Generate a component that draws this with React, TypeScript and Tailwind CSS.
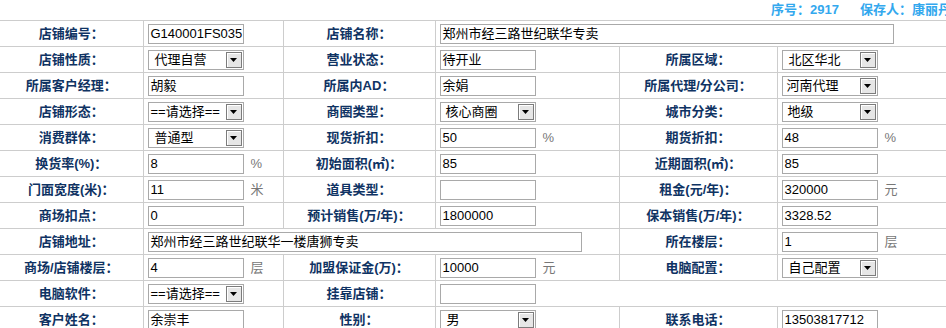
import React from "react";

const FONT = '"Liberation Sans", "Noto Sans CJK SC", sans-serif';

function Label({ children }: { children: React.ReactNode }) {
  return (
    <td className="h-[26px] border border-[#cdcdcd] text-center align-middle text-[13px] font-bold whitespace-nowrap text-[#0f3363]">
      {children}
    </td>
  );
}

function TextBox({ value, width = 96 }: { value?: string; width?: number }) {
  return (
    <div
      className="box-border flex h-[20px] items-center border border-[#a9a9a9] bg-white pl-[2px] text-[13px] leading-none whitespace-nowrap text-black"
      style={{ width }}
    >
      {value}
    </div>
  );
}

function Select({ value, pad = 6 }: { value: string; pad?: number }) {
  return (
    <div className="box-border flex h-[20px] w-[96px] items-center border border-[#a9a9a9] bg-white">
      <span className="flex-1 text-[13px] leading-none whitespace-nowrap text-black" style={{ paddingLeft: pad }}>
        {value}
      </span>
      <span className="mr-[1px] box-border flex h-[16px] w-[16px] items-center justify-center border border-[#7c7c7c] bg-[#e6e6e6] shadow-[inset_1px_1px_0_#ffffff]">
        <svg width="7" height="4" viewBox="0 0 7 4">
          <path d="M0 0h7L3.5 4z" fill="#000" />
        </svg>
      </span>
    </div>
  );
}

function Field({
  children,
  unit,
  colSpan,
}: {
  children?: React.ReactNode;
  unit?: string;
  colSpan?: number;
}) {
  return (
    <td colSpan={colSpan} className="h-[26px] border border-[#cdcdcd] pl-[4px] align-middle">
      <div className="flex items-center">
        {children}
        {unit && <span className="ml-[7px] text-[13px] text-[#777]">{unit}</span>}
      </div>
    </td>
  );
}

export default function App() {
  return (
    <div className="w-[946px] h-[328px] overflow-hidden bg-white" style={{ fontFamily: FONT }}>
      <div className="flex h-[20px] items-center pl-[771px] text-[13px] font-bold whitespace-nowrap text-[#33a8ee]">
        <span>序号：2917</span>
        <span className="ml-[21px]">保存人：康丽丹</span>
      </div>
      <table className="w-[970px] table-fixed border-collapse">
        <colgroup>
          <col className="w-[143px]" />
          <col className="w-[140px]" />
          <col className="w-[152px]" />
          <col className="w-[184px]" />
          <col className="w-[158px]" />
          <col className="w-[193px]" />
        </colgroup>
        <tbody className="[&_tr>td:first-child]:border-l-0">
          <tr>
            <Label>店铺编号：</Label>
            <Field><TextBox value="G140001FS035" /></Field>
            <Label>店铺名称：</Label>
            <Field colSpan={3}><TextBox value="郑州市经三路世纪联华专卖" width={454} /></Field>
          </tr>
          <tr>
            <Label>店铺性质：</Label>
            <Field><Select value="代理自营" /></Field>
            <Label>营业状态：</Label>
            <Field><TextBox value="待开业" /></Field>
            <Label>所属区域：</Label>
            <Field><Select value="北区华北" /></Field>
          </tr>
          <tr>
            <Label>所属客户经理：</Label>
            <Field><TextBox value="胡毅" /></Field>
            <Label>所属内AD：</Label>
            <Field><TextBox value="余娟" /></Field>
            <Label>所属代理/分公司：</Label>
            <Field><Select value="河南代理" pad={4} /></Field>
          </tr>
          <tr>
            <Label>店铺形态：</Label>
            <Field><Select value="==请选择==" pad={2} /></Field>
            <Label>商圈类型：</Label>
            <Field><Select value="核心商圈" pad={5} /></Field>
            <Label>城市分类：</Label>
            <Field><Select value="地级" pad={5} /></Field>
          </tr>
          <tr>
            <Label>消费群体：</Label>
            <Field><Select value="普通型" /></Field>
            <Label>现货折扣：</Label>
            <Field unit="%"><TextBox value="50" /></Field>
            <Label>期货折扣：</Label>
            <Field unit="%"><TextBox value="48" /></Field>
          </tr>
          <tr>
            <Label>换货率(%)：</Label>
            <Field unit="%"><TextBox value="8" /></Field>
            <Label>初始面积(㎡)：</Label>
            <Field><TextBox value="85" /></Field>
            <Label>近期面积(㎡)：</Label>
            <Field><TextBox value="85" /></Field>
          </tr>
          <tr>
            <Label>门面宽度(米)：</Label>
            <Field unit="米"><TextBox value="11" /></Field>
            <Label>道具类型：</Label>
            <Field><TextBox /></Field>
            <Label>租金(元/年)：</Label>
            <Field unit="元"><TextBox value="320000" /></Field>
          </tr>
          <tr>
            <Label>商场扣点：</Label>
            <Field><TextBox value="0" /></Field>
            <Label>预计销售(万/年)：</Label>
            <Field><TextBox value="1800000" /></Field>
            <Label>保本销售(万/年)：</Label>
            <Field><TextBox value="3328.52" /></Field>
          </tr>
          <tr>
            <Label>店铺地址：</Label>
            <Field colSpan={3}><TextBox value="郑州市经三路世纪联华一楼唐狮专卖" width={434} /></Field>
            <Label>所在楼层：</Label>
            <Field unit="层"><TextBox value="1" /></Field>
          </tr>
          <tr>
            <Label>商场/店铺楼层：</Label>
            <Field unit="层"><TextBox value="4" /></Field>
            <Label>加盟保证金(万)：</Label>
            <Field unit="元"><TextBox value="10000" /></Field>
            <Label>电脑配置：</Label>
            <Field><Select value="自己配置" /></Field>
          </tr>
          <tr>
            <Label>电脑软件：</Label>
            <Field><Select value="==请选择==" pad={2} /></Field>
            <Label>挂靠店铺：</Label>
            <Field colSpan={3}><TextBox /></Field>
          </tr>
          <tr>
            <Label>客户姓名：</Label>
            <Field><TextBox value="余崇丰" /></Field>
            <Label>性别：</Label>
            <Field><Select value="男" /></Field>
            <Label>联系电话：</Label>
            <Field><TextBox value="13503817712" /></Field>
          </tr>
        </tbody>
      </table>
    </div>
  );
}
